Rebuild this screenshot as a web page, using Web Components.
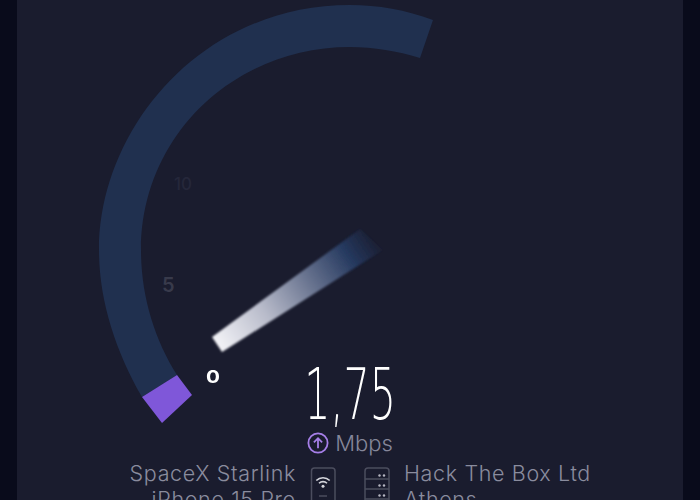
<!DOCTYPE html>
<html lang="en"><head><meta charset="utf-8"><title>Speed test</title>
<style>
html,body{margin:0;height:500px;overflow:hidden;background:#090b1b}
body{font-family:"Inter","Liberation Sans",sans-serif}
</style></head>
<body>
<speed-app>
  <speed-gauge></speed-gauge>
  <speed-readout value="1,75" unit="Mbps"></speed-readout>
  <speed-route>
    <speed-endpoint slot="client" align="end"><span>SpaceX Starlink</span><span>iPhone 15 Pro</span></speed-endpoint>
    <speed-endpoint slot="server" align="start"><span>Hack The Box Ltd</span><span>Athens</span></speed-endpoint>
  </speed-route>
</speed-app>
<script>
class SpeedApp extends HTMLElement{constructor(){super();this.attachShadow({mode:'open'}).innerHTML=`<style>
:host{display:flex;flex-direction:column;box-sizing:border-box;width:666px;height:500px;margin-left:17px;background:#1a1c2e;overflow:hidden}
</style><slot></slot>`}}
class SpeedGauge extends HTMLElement{constructor(){super();
 const d='M142 397C115 350 99 300 99 250C99 130 200 5 350 5C378 5 406 10 433 20L420 58C397 51 374 47 350 47C235 47 141 135 141 250C141 297 155 340 177 375Z';
 this.attachShadow({mode:'open'}).innerHTML=`<style>
:host{display:block;position:relative;height:358px;flex:none}
svg{position:absolute;left:-17px;top:0;overflow:visible}
span{position:absolute;font:600 20px "Inter","Liberation Sans",sans-serif;line-height:1}
.z{left:190px;top:368px;color:#fff;font-size:18px;font-weight:700;transform:scaleX(1.15)}
.f{left:145px;top:275px;color:#383a4b}
.t{left:157px;top:176px;color:#25273a;font-size:17px;font-weight:500}
</style>
<svg width="700" height="500" viewBox="0 0 700 500" aria-hidden="true">
<defs><linearGradient id="n" gradientUnits="userSpaceOnUse" x1="216" y1="345" x2="378" y2="236">
<stop offset="0" stop-color="#f4f4f8"/><stop offset=".3" stop-color="#b8bbca"/><stop offset=".58" stop-color="#68738f"/><stop offset=".82" stop-color="#25395f"/><stop offset="1" stop-color="#22355a" stop-opacity="0"/></linearGradient>
<filter id="b" x="-5%" y="-5%" width="110%" height="110%"><feGaussianBlur stdDeviation=".8"/></filter></defs>
<path d="${d}" fill="#20304f"/>
<polygon points="142,397 177,375 192,395 162,423" fill="#7f57d9"/>
<polygon points="212,337 360,229 383,250 222,352" fill="url(#n)" filter="url(#b)"/>
</svg>
<span class="t">10</span><span class="f">5</span><span class="z">0</span>`}}
class SpeedReadout extends HTMLElement{constructor(){super();
 this.attachShadow({mode:'open'}).innerHTML=`<style>
:host{display:flex;flex-direction:column;align-items:center;flex:none;color:#fff}
.v{font:200 71px/73px "DejaVu Sans",sans-serif;color:#fff;transform:scaleX(.58);white-space:nowrap;height:62px}
.u{display:flex;align-items:center;gap:6px;height:28px;margin-top:9px;color:#85879a;font-size:22px;font-weight:300}
svg{display:block}
</style>
<div class="v">${this.getAttribute('value')}</div>
<div class="u"><svg width="22" height="22" viewBox="0 0 22 22" aria-hidden="true"><circle cx="11" cy="11" r="9.6" fill="none" stroke="#a67fe8" stroke-width="1.8"/><path d="M11 16.2V6.4M6.9 10.3 11 6.2l4.1 4.1" fill="none" stroke="#a67fe8" stroke-width="1.8"/></svg><span>${this.getAttribute('unit')}</span></div>`}}
class SpeedRoute extends HTMLElement{constructor(){super();
 this.attachShadow({mode:'open'}).innerHTML=`<style>
:host{display:grid;grid-template-columns:1fr auto 1fr;column-gap:14px;flex:none;margin-top:3px}
.i{display:flex;gap:28px;padding-top:7px;height:60px;box-sizing:border-box}
svg{display:block}
</style>
<slot name="client"></slot>
<div class="i">
<svg width="26" height="50" viewBox="0 0 26 50" aria-hidden="true"><rect x="1.500" y="1" width="23.500" height="48" rx="3" fill="none" stroke="#4b4d5e" stroke-width="1.500"/>
<g fill="none" stroke="#d4d5dc" stroke-width="1.600"><path d="M6.300 13.500a9.500 9.500 0 0 1 13.400 0"/><path d="M9 16.300a5.700 5.700 0 0 1 8 0"/></g><circle cx="13" cy="19.200" r="1.500" fill="#d4d5dc"/><path d="M9 29h8" stroke="#4b4d5e" stroke-width="1.500"/></svg>
<svg width="26" height="50" viewBox="0 0 26 50" aria-hidden="true"><g fill="none" stroke="#4b4d5e" stroke-width="1.500"><rect x="1" y="1" width="24" height="48" rx="3"/><path d="M1 12h24M1 22h24M1 32h24"/></g>
<g fill="#b4b5c0"><circle cx="15.500" cy="8.500" r="1.200"/><circle cx="20" cy="8.500" r="1.200"/><circle cx="15.500" cy="18.500" r="1.200"/><circle cx="20" cy="18.500" r="1.200"/><circle cx="15.500" cy="28.500" r="1.200"/><circle cx="20" cy="28.500" r="1.200"/></g></svg>
</div>
<slot name="server"></slot>`}}
class SpeedEndpoint extends HTMLElement{constructor(){super();
 const end=this.getAttribute('align')==='end';
 this.attachShadow({mode:'open'}).innerHTML=`<style>
:host{display:flex;flex-direction:column;align-items:${end?'flex-end':'flex-start'};color:#8a8c9e;font-size:21.5px;font-weight:300;line-height:26px;letter-spacing:.65px;white-space:nowrap}
::slotted(span){display:block}
</style><slot></slot>`}}
customElements.define('speed-app',SpeedApp);
customElements.define('speed-gauge',SpeedGauge);
customElements.define('speed-readout',SpeedReadout);
customElements.define('speed-route',SpeedRoute);
customElements.define('speed-endpoint',SpeedEndpoint);
</script>
</body></html>
